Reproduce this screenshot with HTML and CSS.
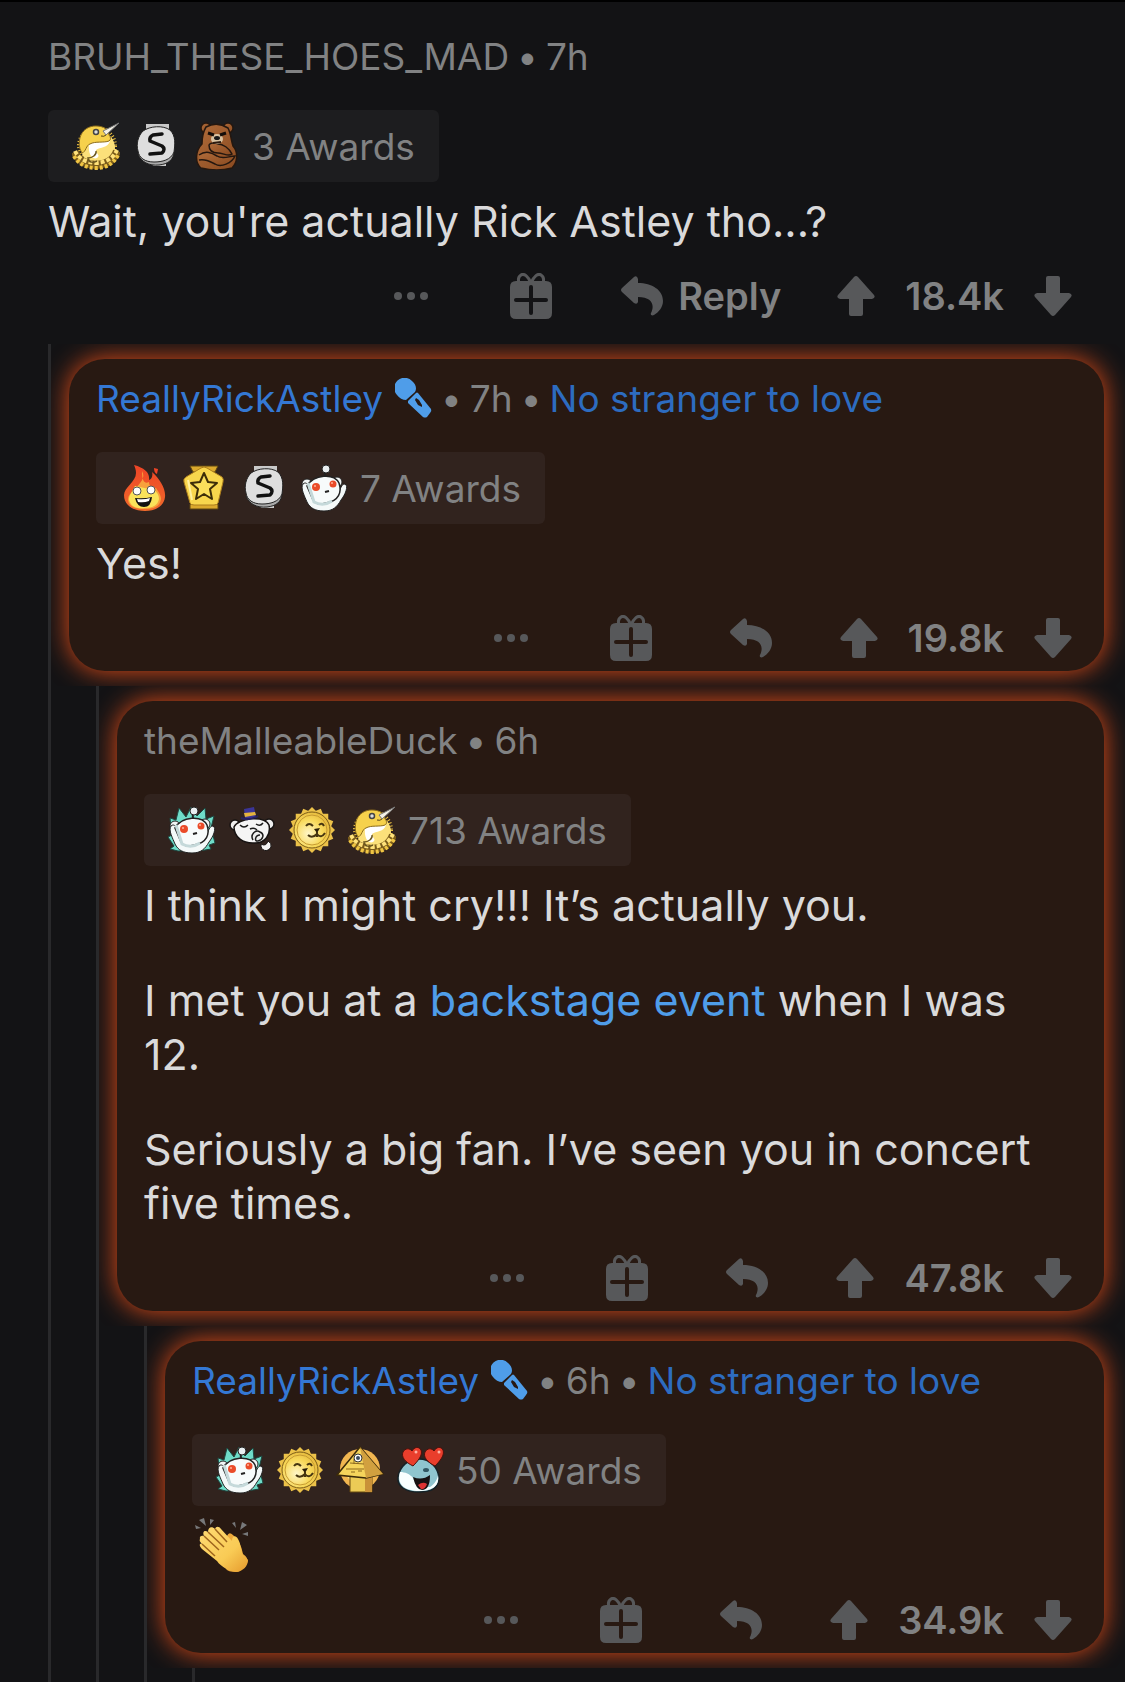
FILE: index.html
```html
<!DOCTYPE html>
<html lang="en">
<head>
    <meta charset="UTF-8">
    <meta name="viewport" content="width=device-width, initial-scale=1.0">
    <title>Comments</title>
    <link rel="stylesheet" href="styles.css">
</head>
<body>
    <!-- icons -->
    <svg class="sprite" aria-hidden="true">
        <defs>
            <radialGradient id="goldFill" cx="40%" cy="60%" r="65%">
                <stop offset="0" stop-color="#fff6c8"/>
                <stop offset="0.6" stop-color="#f8d95a"/>
                <stop offset="1" stop-color="#e5b83a"/>
            </radialGradient>
            <linearGradient id="fireFill" x1="0" y1="0" x2="0" y2="1">
                <stop offset="0" stop-color="#ee4426"/>
                <stop offset="1" stop-color="#ef6a2b"/>
            </linearGradient>
            <linearGradient id="bearFill" x1="0" y1="0" x2="1" y2="1">
                <stop offset="0" stop-color="#b06c3a"/>
                <stop offset="1" stop-color="#8a4a20"/>
            </linearGradient>
            <linearGradient id="handFill" x1="0" y1="0" x2="1" y2="1">
                <stop offset="0" stop-color="#ffdb74"/>
                <stop offset="0.6" stop-color="#f9cb55"/>
                <stop offset="1" stop-color="#e59a2c"/>
            </linearGradient>
        </defs>
        <symbol id="dots" viewBox="0 0 36 44">
            <circle cx="5" cy="22" r="4"/><circle cx="18" cy="22" r="4"/><circle cx="31" cy="22" r="4"/>
        </symbol>
        <symbol id="gift" viewBox="0 0 42 46">
            <path d="M21 10C18 3 14 0 11 2c-3 2-3 5-2 8M21 10c3-7 7-10 10-8 3 2 3 5 2 8" fill="none" stroke="currentColor" stroke-width="3"/>
            <path fill-rule="evenodd" d="M6 8h30q6 0 6 6v26q0 6-6 6H6q-6 0-6-6V14q0-6 6-6zm13 6v11H6q-2 0-2 2t2 2h13v11q0 2 2 2t2-2V29h13q2 0 2-2t-2-2H23V14q0-2-2-2t-2 2z"/>
        </symbol>
        <symbol id="reply" viewBox="0 0 42 40">
            <path d="M1 12 13 1q3-2 4 2v4c14 0 25 7 25 18 0 6-4 11-9 14-2 1-4 0-3-2 4-8 1-16-13-16v5q-1 3-4 1L1 16q-2-2 0-4z"/>
        </symbol>
        <symbol id="up" viewBox="0 0 38 40">
            <path d="M17 1q2-2 4 0l16 18q2 3-2 4h-9v15q0 2-2 2H14q-2 0-2-2V23H3q-4-1-2-4z"/>
        </symbol>
        <symbol id="down" viewBox="0 0 38 40">
            <path d="M17 39q2 2 4 0l16-18q2-3-2-4h-9V2q0-2-2-2H14q-2 0-2 2v15H3q-4 1-2 4z"/>
        </symbol>
        <symbol id="mic" viewBox="0 0 38 40">
            <path d="M2 17A10 10 0 0 1 17 3c4 3 5 8 3 11L11 22c-3 0-7-2-9-5z"/>
            <path fill-rule="evenodd" d="m13 23 8-8q1-1 2 0l13 16q1 2-1 4l-3 4q-2 1-4 0L13 25zm7-1 3 5 4 2 0-2-3-5-3-2z"/>
        </symbol>

        <symbol id="narwhal" viewBox="0 0 48 48">
            <circle cx="25" cy="24" r="18" fill="none" stroke="#f0c544" stroke-width="4" stroke-dasharray="1 2"/>
            <circle cx="26" cy="26" r="17" fill="#fbe07a"/>
            <path d="M3 30Q7 42 24 43 41 42 45 29" fill="none" stroke="#7a5c1b" stroke-width="8"/>
            <path d="M3 29Q8 40 24 41 40 40 45 28" fill="none" stroke="#ffe27a" stroke-width="4" stroke-dasharray="4 2"/>
            <path d="M2 34Q9 46 24 46 39 46 46 33" fill="none" stroke="#f0c544" stroke-width="4" stroke-dasharray="3 2"/>
            <path d="M17 22c5-3 12-2 21-3-2 7-10 6-14 9 0 4 5 5 1 8-5 2-9-4-8-14z" fill="#fff"/>
            <path d="M8 27C5 14 12 4 24 4c8 0 13 4 13 9 2 2 2 5 0 6-5 2-14 0-19 3-4 1-4 8-8 9z" fill="#f6d14c" stroke="#8c6c1c" stroke-width="1"/>
            <path d="M24 29c1 4-4 7-8 7 1 5 5 5 9 3" fill="none" stroke="#6b5720" stroke-width="1.5"/>
            <circle cx="24" cy="10" r="2.5" fill="#ddd" stroke="#444" stroke-width="1.5"/>
            <path d="M29 14q3 1 5-1" fill="none" stroke="#594615" stroke-width="1"/>
            <path d="m31 9 16-8-13 12z" fill="#f4f1e6" stroke="#777" stroke-width="1"/>
        </symbol>
        <symbol id="silver" viewBox="0 0 48 48">
            <path d="M14 2h23v5H14zM15 40h19v4H22z" fill="#c9c9c9"/>
            <path d="M6 32c3 8 11 12 21 11 9-1 15-5 15-14z" fill="#aaa" stroke="#222" stroke-width="1"/>
            <path d="M11 9c7-5 20-6 27-1 6 6 5 14 4 22-3 8-12 10-20 10-9 0-15-4-16-11-2-7 0-15 5-20z" fill="#dedede" stroke="#222" stroke-width="1"/>
            <path d="m30 12-9 1q-4 2-3 6l12 5q4 3 0 7l-12 1" fill="none" stroke="#111" stroke-width="3.5" stroke-linecap="round" stroke-linejoin="round"/>
        </symbol>
        <symbol id="bear" viewBox="0 0 48 48">
            <g fill="url(#bearFill)" stroke="#24170f" stroke-width="1.5">
                <circle cx="14" cy="6" r="5"/><circle cx="36" cy="6" r="5"/>
                <path d="M14 5q11-6 22 1c3 6 3 12 5 18 6 7 4 17-1 22q-15 4-31 0C2 40 4 28 10 22c0-6 1-12 4-17z"/>
                <path d="M7 33c7-5 13-2 18 1 6 4 12 0 18 0-3 7-14 12-20 8-6-3-10-5-16-4"/>
                <path d="M17 23c0 6 4 8 9 8 5 0 11 4 14 1-3-6-9-10-14-10-3-2-8-1-9 1z"/>
            </g>
            <ellipse cx="25" cy="17" rx="6" ry="5" fill="#d9c2a1"/>
            <path d="m16 11 6 2M34 11l-6 2" stroke="#140d09" stroke-width="3"/>
            <ellipse cx="25" cy="16" rx="3" ry="2" fill="#181818"/>
            <path d="m21 21 8-1" stroke="#2c1b10" stroke-width="2"/>
        </symbol>
        <symbol id="fire" viewBox="0 0 48 48">
            <path d="M14 1c11 3 16 8 15 15 3-1 4-5 3-8 8 7 14 17 13 25-1 9-9 14-20 14S4 42 4 31c0-8 12-13 12-22 0-3-1-6-2-8z" fill="url(#fireFill)"/>
            <path d="M22 7c4 7-2 12-7 18-3 4-7 5-7 11 1 7 8 9 17 9 8 0 15-2 16-10 0-4-3-8-5-11-4 1-7-2-7-6-4 2-7 0-7-11z" fill="#f8a13c"/>
            <path d="M15 22c-3 6-6 9-6 14 2 7 8 9 16 8 8 0 13-3 14-9 0-4-2-7-5-9z" fill="#fae35a"/>
            <path d="m34 4 4 1-1 5q-3-1-3-6z" fill="#ee4426"/>
            <circle cx="17" cy="27" r="4" fill="#fff" stroke="#555" stroke-width="1"/>
            <circle cx="31" cy="26" r="4" fill="#fff" stroke="#555" stroke-width="1"/>
            <path d="M15 34q9 1 17-1-1 10-8 10-7 0-9-9z" fill="#111"/>
            <path d="M17 35q7 1 13-1l-1 3q-5 2-11 1z" fill="#fff"/>
        </symbol>
        <symbol id="gold" viewBox="0 0 48 48">
            <path d="M10 2h28l-3 6H13zM10 40h28v5H10z" fill="#dba92d" stroke="#5d4510" stroke-width="1"/>
            <path d="M21 4q3-2 6 0l15 9q2 2 1 5l-5 21q-1 2-4 2H14q-3 0-4-2L4 18q-1-3 2-5z" fill="#f8d64d" stroke="#ad7e1c" stroke-width="1"/>
            <path d="m8 16 4 20" stroke="#fff0a0" stroke-width="2"/>
            <path d="m24 9 4 9 9 1-7 6 2 10-8-5-8 5 2-10-7-6 9-1z" fill="#fbdf5b" stroke="#3d2d08" stroke-width="2" stroke-linejoin="round"/>
        </symbol>
        <symbol id="snoo" viewBox="0 0 48 48">
            <path d="M26 14q-3-5 1-9" fill="none" stroke="#222" stroke-width="2"/>
            <circle cx="26" cy="5" r="4" fill="#e9eef0" stroke="#222" stroke-width="1"/>
            <circle cx="7" cy="20" r="5" fill="#f1f5f5" stroke="#222" stroke-width="1"/><circle cx="37" cy="18" r="5" fill="#f1f5f5" stroke="#222" stroke-width="1"/>
            <path d="M3 20c3-3 6 1 8 7l27 2c3-4 3-9 7-9 4 2 0 11-4 16-4 7-8 11-17 11S10 44 7 38C5 33 0 24 3 20z" fill="#f4f9f9" stroke="#222" stroke-width="1"/>
            <path d="M7 22C14 10 34 9 39 19c3 9 0 18-13 20-7 2-11 1-13-3z" fill="#f7fbfb" stroke="#222" stroke-width="1.5"/>
            <path d="m8 19 6 19q9 5 18-1" fill="none" stroke="#c5d9da" stroke-width="3"/>
            <circle cx="16" cy="23" r="4" fill="#ea4b29"/><circle cx="33" cy="20" r="3.5" fill="#ea4b29"/>
            <circle cx="15" cy="22" r="1" fill="#ffb39a"/><circle cx="32" cy="19" r="1" fill="#ffb39a"/>
            <path d="m25 28 4-1" stroke="#222" stroke-width="2"/>
        </symbol>
        <symbol id="snooTeal" viewBox="0 0 48 48">
            <path d="M3 22 2 12l6 2 3-12 7 9 5-10 6 9 8-8 1 11 8-3-3 12 4 15-6 2 2 4-12 2H10l-8-2 4-3-6-9 4-2z" fill="#6fdcc8" stroke="#1d4740" stroke-width="1"/>
            <use href="#snoo"/>
        </symbol>
        <symbol id="tophat" viewBox="0 0 48 48">
            <circle cx="7" cy="19" r="5" fill="#eee" stroke="#171312" stroke-width="1.5"/><circle cx="41" cy="18" r="5" fill="#eee" stroke="#171312" stroke-width="1.5"/>
            <path d="M6 21c4-9 30-12 35-2 2 10-4 18-14 18C15 38 6 31 6 21z" fill="#f5f5f5" stroke="#171312" stroke-width="1.5"/>
            <path d="m16 3 10-2 2 10q-5 3-11 1z" fill="#3b3597"/>
            <path d="m16 7 11-1 1 3-11 2z" fill="#e5b43e"/>
            <path d="M13 12q8 3 17-2" fill="none" stroke="#27225e" stroke-width="2"/>
            <path d="M12 19q4 4 8 0M28 18q4 3 7-1M22 23q4-2 7 1" fill="none" stroke="#1b1b1b" stroke-width="1.5"/>
            <path d="M25 34c-3-5 2-11 7-8 5 2 3 8-2 9-4 1-3-6 2-6" fill="#eee" stroke="#1b1b1b" stroke-width="1.5"/>
            <path d="M33 38q5 3 7-3 4 2 3 6c-3 6-11 4-10-3z" fill="#f5f5f5" stroke="#171312" stroke-width="1"/>
        </symbol>
        <symbol id="sun" viewBox="0 0 48 48">
            <g fill="#ecc249">
                <path id="ray" d="M24 1 47 24 24 47 1 24z"/>
                <use href="#ray" transform="rotate(22.5 24 24)"/>
                <use href="#ray" transform="rotate(45 24 24)"/>
                <use href="#ray" transform="rotate(67.5 24 24)"/>
            </g>
            <circle cx="24" cy="24" r="18" fill="url(#goldFill)" stroke="#7c5d17" stroke-width="1"/>
            <circle cx="24" cy="24" r="15" fill="none" stroke="#c69a31" stroke-width="1"/>
            <path d="M18 20q3-4 7 0M31 19q3-3 5 1" fill="none" stroke="#463510" stroke-width="2"/>
            <path d="m26 23 6-1-3 5z" fill="#2a1e08"/>
            <path d="M20 29q4 4 9-1 4 5 8-1M29 26v5" fill="none" stroke="#463510" stroke-width="2"/>
        </symbol>
        <symbol id="pyramid" viewBox="0 0 48 48">
            <circle cx="24" cy="23" r="20" fill="#f1b650"/>
            <circle cx="24" cy="23" r="15" fill="#fbe285"/>
            <path d="M14 30h22v16H14z" fill="#eccb56" stroke="#67490f" stroke-width="1"/>
            <path d="M29 31h7v15h-7z" fill="#c99138"/>
            <path d="M24 1 47 28l-17 4L1 29z" fill="#f5d45b" stroke="#3b2a0a" stroke-width="1.5"/>
            <path d="m24 1 23 27-17 4z" fill="#d1a03f"/>
            <path d="m14 17 14 1M10 23h18M18 13v5M15 26h4M22 25h4" stroke="#8b681f" stroke-width="1"/>
            <circle cx="22" cy="12" r="4" fill="#fff" stroke="#333" stroke-width="1"/><circle cx="22" cy="12" r="2" fill="#3b4b60"/>
        </symbol>
        <symbol id="hearts" viewBox="0 0 48 48">
            <path d="M2 31C4 20 12 13 23 13s19 8 20 19c0 9-7 14-20 14S1 41 2 31z" fill="#8fc5cf" stroke="#162126" stroke-width="1.5"/>
            <path d="M4 26c5 0 10 2 13 6 2 6 6 10 17 9 5-3 8-9 8-12 2 11-6 16-19 16S0 39 4 26z" fill="#f8ffff"/>
            <path d="M17 31q9 4 17-2 0 15-8 15-6 0-9-13z" fill="#171112"/>
            <path d="M22 39q5-4 9-1-2 6-6 5z" fill="#d33"/>
            <ellipse cx="30" cy="24" rx="3" ry="2" fill="#315763"/>
            <path id="heart" d="M17 20C9 16 5 11 7 6c2-4 7-4 9-1 2-4 7-5 9-1 2 5-3 11-8 16z" fill="#e93e2c" stroke="#4b100b" stroke-width="1"/>
            <use href="#heart" x="22"/>
            <circle cx="20" cy="6" r="1.5" fill="#ffb1a2"/><circle cx="43" cy="6" r="1.5" fill="#ffb1a2"/>
        </symbol>
        <symbol id="clap" viewBox="0 0 54 54">
            <path d="m4 2 5-2 2 8zM0 7l6 3-5 1zM15 1l4 1-4 5zM37 5l3-1 1 6zM47 4l5 3-7 5zM53 14v4l-6-2z" fill="#77787a"/>
            <path d="M32 18q2-5 6-1 8 7 10 19 6 4 4 9-6 9-11 9-8 0-10-3z" fill="#eda93b"/>
            <path d="M5 21c-1-3 2-4 4-3-2-5 1-6 4-4 0-5 4-6 7-3 1-3 4-3 6 0l11 12c0-6 4-6 6-2 3 5 3 12 5 16 2 2 4 3 5 5 0 6-5 11-11 12-8-1-16-5-20-11L7 31c-3-3-3-6 0-5-2-2-3-4-2-5z" fill="url(#handFill)"/>
            <path d="m9 18 15 14M13 14l16 15M20 11l12 13M7 26l13 12" fill="none" stroke="#9f651d" stroke-width="1.5"/>
        </symbol>
    </svg>

    <main class="comments">
        <article class="comment root">
            <header class="meta">
                <a class="name" href="#">BRUH_THESE_HOES_MAD</a><span>•</span><span>7h</span>
            </header>
            <button class="awards" type="button">
                <svg><use href="#narwhal"/></svg>
                <svg><use href="#silver"/></svg>
                <svg><use href="#bear"/></svg>
                <span>3 Awards</span>
            </button>
            <div class="text">
                <p>Wait, you're actually Rick Astley tho...?</p>
            </div>
            <div class="actions labelled">
                <button type="button" aria-label="More"><svg class="dots"><use href="#dots"/></svg></button>
                <button type="button" aria-label="Give award"><svg class="gift"><use href="#gift"/></svg></button>
                <button type="button" class="reply"><svg><use href="#reply"/></svg>Reply</button>
                <div class="votes">
                    <button type="button" aria-label="Upvote"><svg><use href="#up"/></svg></button>
                    <span>18.4k</span>
                    <button type="button" aria-label="Downvote"><svg><use href="#down"/></svg></button>
                </div>
            </div>
        </article>

        <section class="thread">
            <div class="cell">
                <article class="comment card">
                    <header class="meta">
                        <a class="name op" href="#">ReallyRickAstley<svg class="mic"><use href="#mic"/></svg></a><span>•</span><span>7h</span><span>•</span><span class="flair">No stranger to love</span>
                    </header>
                    <button class="awards" type="button">
                        <svg><use href="#fire"/></svg>
                        <svg><use href="#gold"/></svg>
                        <svg><use href="#silver"/></svg>
                        <svg><use href="#snoo"/></svg>
                        <span>7 Awards</span>
                    </button>
                    <div class="text">
                        <p>Yes!</p>
                    </div>
                    <div class="actions">
                        <button type="button" aria-label="More"><svg class="dots"><use href="#dots"/></svg></button>
                        <button type="button" aria-label="Give award"><svg class="gift"><use href="#gift"/></svg></button>
                        <button type="button" class="reply" aria-label="Reply"><svg><use href="#reply"/></svg></button>
                        <div class="votes">
                            <button type="button" aria-label="Upvote"><svg><use href="#up"/></svg></button>
                            <span>19.8k</span>
                            <button type="button" aria-label="Downvote"><svg><use href="#down"/></svg></button>
                        </div>
                    </div>
                </article>
            </div>

            <section class="thread">
                <div class="cell">
                    <article class="comment card">
                        <header class="meta">
                            <a class="name" href="#">theMalleableDuck</a><span>•</span><span>6h</span>
                        </header>
                        <button class="awards" type="button">
                            <svg><use href="#snooTeal"/></svg>
                            <svg><use href="#tophat"/></svg>
                            <svg><use href="#sun"/></svg>
                            <svg><use href="#narwhal"/></svg>
                            <span>713 Awards</span>
                        </button>
                        <div class="text">
                            <p>I think I might cry!!! It’s actually you.</p>
                            <p>I met you at a <a href="#">backstage event</a> when I was 12.</p>
                            <p>Seriously a big fan. I’ve seen you in concert five times.</p>
                        </div>
                        <div class="actions">
                            <button type="button" aria-label="More"><svg class="dots"><use href="#dots"/></svg></button>
                            <button type="button" aria-label="Give award"><svg class="gift"><use href="#gift"/></svg></button>
                            <button type="button" class="reply" aria-label="Reply"><svg><use href="#reply"/></svg></button>
                            <div class="votes">
                                <button type="button" aria-label="Upvote"><svg><use href="#up"/></svg></button>
                                <span>47.8k</span>
                                <button type="button" aria-label="Downvote"><svg><use href="#down"/></svg></button>
                            </div>
                        </div>
                    </article>
                </div>

                <section class="thread">
                    <div class="cell">
                        <article class="comment card">
                            <header class="meta">
                                <a class="name op" href="#">ReallyRickAstley<svg class="mic"><use href="#mic"/></svg></a><span>•</span><span>6h</span><span>•</span><span class="flair">No stranger to love</span>
                            </header>
                            <button class="awards" type="button">
                                <svg><use href="#snooTeal"/></svg>
                                <svg><use href="#sun"/></svg>
                                <svg><use href="#pyramid"/></svg>
                                <svg><use href="#hearts"/></svg>
                                <span>50 Awards</span>
                            </button>
                            <div class="text">
                                <svg class="emoji" role="img" aria-label="Clapping hands"><use href="#clap"/></svg>
                            </div>
                            <div class="actions">
                                <button type="button" aria-label="More"><svg class="dots"><use href="#dots"/></svg></button>
                                <button type="button" aria-label="Give award"><svg class="gift"><use href="#gift"/></svg></button>
                                <button type="button" class="reply" aria-label="Reply"><svg><use href="#reply"/></svg></button>
                                <div class="votes">
                                    <button type="button" aria-label="Upvote"><svg><use href="#up"/></svg></button>
                                    <span>34.9k</span>
                                    <button type="button" aria-label="Downvote"><svg><use href="#down"/></svg></button>
                                </div>
                            </div>
                        </article>
                    </div>
                    <section class="thread next"></section>
                </section>
            </section>
        </section>
    </main>
</body>
</html>
```
FILE: styles.css
```css
* { box-sizing: border-box; }
body { margin: 0; background: #131315; color: #dadadb; font-family: Inter, "Liberation Sans", sans-serif; font-size: 37px; }
a { color: #4f9de9; text-decoration: none; }
p { margin: 0; }
button { padding: 0; border: 0; background: none; color: inherit; font: inherit; cursor: pointer; }
svg { display: block; fill: currentColor; }
.sprite { position: absolute; width: 0; height: 0; }

.comments { border-top: 2px solid #000; }
.comment { display: flex; flex-direction: column; align-items: flex-start; }
.root { padding: 30px 53px 15px 48px; }

/* reply tree */
.thread { margin-left: 45px; border-left: 3px solid #29292b; }
.comments > .thread { margin-left: 48px; }
.next { min-height: 14px; }
.cell { padding: 15px 21px 15px 18px; overflow: hidden; }
.card { padding: 15px 32px 0 27px; border-radius: 36px; background: #281912; box-shadow: 0 0 27px rgb(232, 78, 24); }

.meta { display: flex; align-items: center; gap: 8px; height: 48px; color: #818283; white-space: nowrap; }
.name { display: flex; align-items: center; gap: 12px; color: #818283; }
.op { color: #3478d4; }
.flair { color: #2d6cc0; }
.mic { width: 38px; height: 40px; color: #4f9de9; }

.awards { display: flex; align-items: center; gap: 12px; height: 72px; margin-top: 30px; padding: 0 24px; border-radius: 6px; background: #1d1d1f; color: #818283; }
.awards svg { width: 48px; height: 48px; }
.card .awards { background: #31231e; }

.text { margin-top: 12px; font-size: 43px; line-height: 54px; }
.text p + p { margin-top: 41px; }
.emoji { width: 54px; height: 54px; margin-left: 3px; }

.actions { display: flex; align-items: center; align-self: flex-end; height: 66px; margin-top: 15px; color: #57585a; font-size: 38px; font-weight: 600; }
.dots { width: 36px; height: 44px; margin-right: 81px; }
.gift { width: 42px; height: 46px; margin-right: 78px; }
.reply { display: flex; align-items: center; gap: 15px; margin-right: 68px; color: #818283; }
.reply svg { width: 42px; height: 40px; color: #57585a; }
.labelled .gift { margin-right: 69px; }
.labelled .reply { margin-right: 56px; }
.votes { display: flex; align-items: center; gap: 30px; }
.votes span { color: #818283; }
.votes svg { width: 38px; height: 40px; }
```
